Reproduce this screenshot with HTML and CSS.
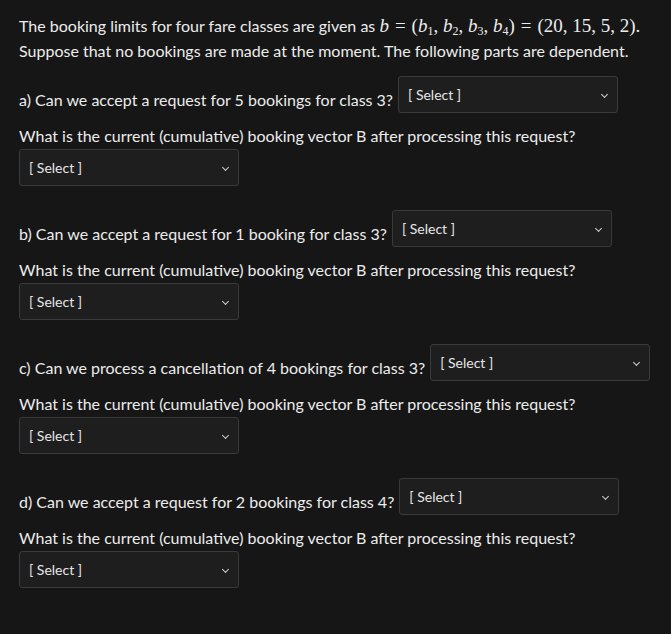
FILE: index.html
```html
<!DOCTYPE html>
<html>
<head>
<meta charset="utf-8">
<link rel="stylesheet" href="styles.css">
</head>
<body>
<div class="page">
  <p class="intro">The booking limits for four fare classes are given as <span class="math"><i>b</i><span class="eq">=</span>(<i>b</i><sub>1</sub>, <i>b</i><sub>2</sub>, <i>b</i><sub>3</sub>, <i>b</i><sub>4</sub>)<span class="eq">=</span>(20, 15, 5, 2).</span><br>Suppose that no bookings are made at the moment. The following parts are dependent.</p>

  <div class="block">
    <div class="row"><span class="q">a) Can we accept a request for 5 bookings for class 3?</span><div class="sel">[ Select ]</div></div>
    <div class="what">What is the current (cumulative) booking vector B after processing this request?</div>
    <div class="sel small">[ Select ]</div>
  </div>

  <div class="block">
    <div class="row"><span class="q">b) Can we accept a request for 1 booking for class 3?</span><div class="sel">[ Select ]</div></div>
    <div class="what">What is the current (cumulative) booking vector B after processing this request?</div>
    <div class="sel small">[ Select ]</div>
  </div>

  <div class="block">
    <div class="row"><span class="q">c) Can we process a cancellation of 4 bookings for class 3?</span><div class="sel">[ Select ]</div></div>
    <div class="what">What is the current (cumulative) booking vector B after processing this request?</div>
    <div class="sel small">[ Select ]</div>
  </div>

  <div class="block">
    <div class="row"><span class="q">d) Can we accept a request for 2 bookings for class 4?</span><div class="sel">[ Select ]</div></div>
    <div class="what">What is the current (cumulative) booking vector B after processing this request?</div>
    <div class="sel small">[ Select ]</div>
  </div>
</div>
</body>
</html>
```
FILE: styles.css
```css
html, body {
  margin: 0;
  padding: 0;
  background: #161616;
}
.page {
  padding: 13px 19px 0 19px;
  font-family: Lato, "Noto Sans", sans-serif;
  font-size: 16px;
  color: #ececec;
}
.intro {
  margin: 0 0 13px 0;
  line-height: 25px;
}
.math {
  font-family: "Liberation Serif", "DejaVu Serif", serif;
  font-size: 19px;
}
.math .eq {
  padding: 0 6px;
}
.math sub {
  font-size: 12px;
  vertical-align: -3px;
  line-height: 0;
}
.block {
  display: flex;
  flex-direction: column;
  align-items: flex-start;
  margin-bottom: 24px;
}
.row {
  display: flex;
  align-items: flex-end;
  gap: 5px;
}
.q {
  line-height: 24px;
  display: block;
  margin-bottom: 1px;
}
.what {
  margin-top: 11px;
  line-height: 24px;
}
.sel {
  box-sizing: border-box;
  width: 220px;
  height: 37px;
  background: #1e1e1e;
  border: 1px solid #3a3a3a;
  border-radius: 3px;
  font-size: 14px;
  color: #e6e6e6;
  display: flex;
  align-items: center;
  padding-left: 9px;
  position: relative;
}
.sel::after {
  content: "";
  position: absolute;
  right: 10px;
  top: 15px;
  width: 4px;
  height: 4px;
  border-right: 1.5px solid #d0d0d0;
  border-bottom: 1.5px solid #d0d0d0;
  transform: rotate(45deg);
}
.sel.small {
  margin-top: 1px;
}
```
